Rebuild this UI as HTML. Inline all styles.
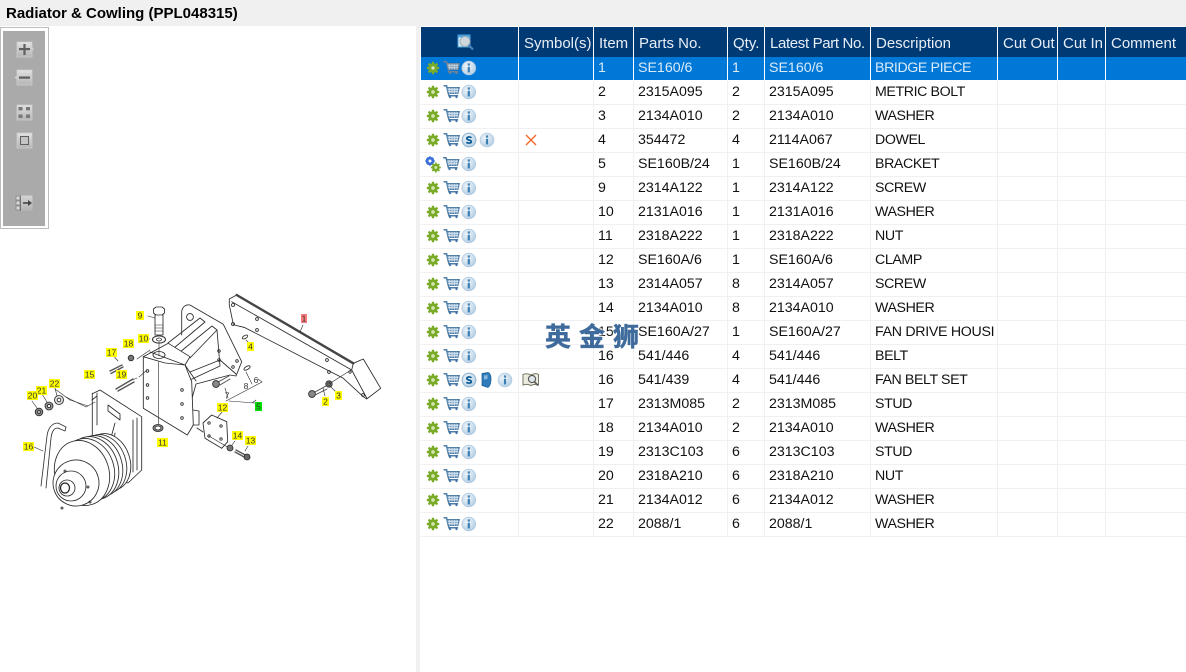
<!DOCTYPE html>
<html><head><meta charset="utf-8"><title>Radiator &amp; Cowling</title>
<style>
html,body{margin:0;padding:0;background:#fff;width:1186px;height:672px;overflow:hidden;font-family:"Liberation Sans","Noto Sans CJK SC",sans-serif;}
.abs{position:absolute}
#title{left:0;top:0;width:1186px;height:26px;background:#f0f0f0;font-weight:bold;font-size:15px;line-height:28px;color:#000;padding-left:6px;box-sizing:border-box;}
#div{left:416px;top:26px;width:4px;height:646px;background:#f0f0f0}
table{position:absolute;left:421px;top:27px;border-collapse:separate;border-spacing:0;table-layout:fixed;width:765px;font-size:14.2px;color:#111}
th{height:30px;background:#003a75;color:#e8eef5;font-weight:normal;font-size:15px;text-align:left;padding:3px 0 0 5px;box-sizing:border-box;border-right:1px solid #fff;white-space:nowrap;overflow:hidden}
td{height:24px;box-sizing:border-box;border-right:1px solid #f0f0f0;border-bottom:1px solid #f0f0f0;padding:0 0 1px 4px;white-space:nowrap;overflow:hidden}
td.d{letter-spacing:-.4px}
tr.s td{background:#0078d7;color:#dcebf8;border-right-color:#fff;border-bottom-color:#fff}
th:last-child,td:last-child{border-right:0}
#wm{left:545px;top:321px;font-size:26px;font-weight:bold;color:#3e6a9c;letter-spacing:8px;line-height:30px;font-family:"Noto Sans CJK SC",sans-serif;white-space:nowrap;-webkit-text-stroke:.5px #3e6a9c;text-shadow:0 0 3px #fff,0 0 3px #fff}
svg{position:absolute;left:0;top:0}
</style></head><body>
<div id="title" class="abs">Radiator &amp; Cowling (PPL048315)</div>
<div id="div" class="abs"></div>

<table>
<colgroup><col style="width:98px"><col style="width:75px"><col style="width:40px"><col style="width:94px"><col style="width:37px"><col style="width:106px"><col style="width:127px"><col style="width:60px"><col style="width:48px"><col style="width:80px"></colgroup>
<tr><th></th><th>Symbol(s)</th><th>Item</th><th>Parts No.</th><th>Qty.</th><th style="letter-spacing:-.35px">Latest Part No.</th><th>Description</th><th>Cut Out</th><th>Cut In</th><th>Comment</th></tr>
<tr class="s"><td></td><td></td><td>1</td><td>SE160/6</td><td>1</td><td>SE160/6</td><td class="d">BRIDGE PIECE</td><td></td><td></td><td></td></tr>
<tr><td></td><td></td><td>2</td><td>2315A095</td><td>2</td><td>2315A095</td><td class="d">METRIC BOLT</td><td></td><td></td><td></td></tr>
<tr><td></td><td></td><td>3</td><td>2134A010</td><td>2</td><td>2134A010</td><td class="d">WASHER</td><td></td><td></td><td></td></tr>
<tr><td></td><td></td><td>4</td><td>354472</td><td>4</td><td>2114A067</td><td class="d">DOWEL</td><td></td><td></td><td></td></tr>
<tr><td></td><td></td><td>5</td><td>SE160B/24</td><td>1</td><td>SE160B/24</td><td class="d">BRACKET</td><td></td><td></td><td></td></tr>
<tr><td></td><td></td><td>9</td><td>2314A122</td><td>1</td><td>2314A122</td><td class="d">SCREW</td><td></td><td></td><td></td></tr>
<tr><td></td><td></td><td>10</td><td>2131A016</td><td>1</td><td>2131A016</td><td class="d">WASHER</td><td></td><td></td><td></td></tr>
<tr><td></td><td></td><td>11</td><td>2318A222</td><td>1</td><td>2318A222</td><td class="d">NUT</td><td></td><td></td><td></td></tr>
<tr><td></td><td></td><td>12</td><td>SE160A/6</td><td>1</td><td>SE160A/6</td><td class="d">CLAMP</td><td></td><td></td><td></td></tr>
<tr><td></td><td></td><td>13</td><td>2314A057</td><td>8</td><td>2314A057</td><td class="d">SCREW</td><td></td><td></td><td></td></tr>
<tr><td></td><td></td><td>14</td><td>2134A010</td><td>8</td><td>2134A010</td><td class="d">WASHER</td><td></td><td></td><td></td></tr>
<tr><td></td><td></td><td>15</td><td>SE160A/27</td><td>1</td><td>SE160A/27</td><td style="letter-spacing:-.3px">FAN DRIVE HOUSI</td><td></td><td></td><td></td></tr>
<tr><td></td><td></td><td>16</td><td>541/446</td><td>4</td><td>541/446</td><td class="d">BELT</td><td></td><td></td><td></td></tr>
<tr><td></td><td></td><td>16</td><td>541/439</td><td>4</td><td>541/446</td><td class="d">FAN BELT SET</td><td></td><td></td><td></td></tr>
<tr><td></td><td></td><td>17</td><td>2313M085</td><td>2</td><td>2313M085</td><td class="d">STUD</td><td></td><td></td><td></td></tr>
<tr><td></td><td></td><td>18</td><td>2134A010</td><td>2</td><td>2134A010</td><td class="d">WASHER</td><td></td><td></td><td></td></tr>
<tr><td></td><td></td><td>19</td><td>2313C103</td><td>6</td><td>2313C103</td><td class="d">STUD</td><td></td><td></td><td></td></tr>
<tr><td></td><td></td><td>20</td><td>2318A210</td><td>6</td><td>2318A210</td><td class="d">NUT</td><td></td><td></td><td></td></tr>
<tr><td></td><td></td><td>21</td><td>2134A012</td><td>6</td><td>2134A012</td><td class="d">WASHER</td><td></td><td></td><td></td></tr>
<tr><td></td><td></td><td>22</td><td>2088/1</td><td>6</td><td>2088/1</td><td class="d">WASHER</td><td></td><td></td><td></td></tr>
</table>

<svg width="1186" height="672" viewBox="0 0 1186 672" xmlns="http://www.w3.org/2000/svg">
<defs>
<radialGradient id="ig" cx=".4" cy=".35" r=".8"><stop offset="0" stop-color="#f2f7fb"/><stop offset="1" stop-color="#a9c7e0"/></radialGradient>
<linearGradient id="bg" x1="0" y1="0" x2="0" y2="1"><stop offset="0" stop-color="#e2e2e2"/><stop offset="1" stop-color="#b4b4b4"/></linearGradient>
<g id="gear"><circle r="3.200" fill="none" stroke="#79ab29" stroke-width="3"/><path stroke="#79ab29" stroke-width="2.300" d="M0-6.200V-3.800M0 3.800V6.200M-6.200 0H-3.800M3.800 0H6.200M-4.400-4.400L-2.700-2.700M4.400 4.400L2.700 2.700M-4.400 4.400L-2.700 2.700M4.400-4.400L2.700-2.700"/><circle r="1.700" fill="#d6e8b0"/></g>
<g id="gearb"><circle r="2.900" fill="none" stroke="#3a6fd8" stroke-width="2.800"/><path stroke="#3a6fd8" stroke-width="1.900" d="M0-4.600V-3M0 3V4.600M-4.600 0H-3M3 0H4.600M-3.200-3.200L-2-2M3.200 3.200L2 2M-3.200 3.200L-2 2M3.200-3.200L2-2"/></g>
<g id="cart" fill="none" stroke="#4a7ba6"><path d="M-8-6H-5L-2.600 4H6.600" stroke-width="1.500"/><path d="M-4.600-4.200H7.800L6.400 1.800H-3.200Z" fill="#8fb2cf" stroke-width="1.100"/><path d="M-2-4V2M.5-4V2M3-4V2M5.500-4V2M-4-2H7M-3.500 0H6.600" stroke-width=".6" stroke="#dbe7f0"/><circle cx="-1.500" cy="5.300" r="1.200" fill="#4a7ba6" stroke="none"/><circle cx="5" cy="5.300" r="1.200" fill="#4a7ba6" stroke="none"/></g>
<g id="cartg" fill="none" stroke="#6f8296"><path d="M-8-6H-5L-2.600 4H6.600" stroke-width="1.500"/><path d="M-4.600-4.200H7.800L6.400 1.800H-3.200Z" fill="#8ea3b8" stroke-width="1.100"/><path d="M-2-4V2M.5-4V2M3-4V2M5.500-4V2M-4-2H7M-3.500 0H6.600" stroke-width=".6" stroke="#c8d6e2"/><circle cx="-1.500" cy="5.300" r="1.200" fill="#6f8296" stroke="none"/><circle cx="5" cy="5.300" r="1.200" fill="#6f8296" stroke="none"/></g>
<g id="info"><circle r="6.900" fill="url(#ig)" stroke="#b0cbe0" stroke-width=".8"/><rect x="-1.100" y="-4.600" width="2.200" height="2.200" fill="#3a7fb3"/><rect x="-1.100" y="-1.200" width="2.200" height="5.600" fill="#3a7fb3"/></g>
<g id="ss"><circle r="6.900" fill="url(#ig)" stroke="#8fb3d0" stroke-width="1"/><path d="M2.300-2.100C1.500-3.400-2.200-3.500-2.200-1.400C-2.200.3 2.300-.3 2.300 1.600C2.300 3.500-1.600 3.400-2.500 2.100" fill="none" stroke="#075a93" stroke-width="1.700"/></g>
<g id="row"><use href="#gear" x="433" y="0"/><use href="#cart" x="451.500" y="-.3"/><use href="#info" x="468.800" y="0"/></g>
<filter id="soft" x="-5%" y="-5%" width="110%" height="110%"><feGaussianBlur stdDeviation=".38"/></filter>
</defs>

<!-- toolbar -->
<rect x=".5" y="27.500" width="48" height="201" fill="#fff" stroke="#bdbdbd"/>
<rect x="3" y="31" width="42" height="195" fill="#aaaaaa"/>
<g stroke="#cfcfcf" stroke-width=".8" fill="url(#bg)">
<path d="M17 42H32V47.500L33.500 49L32 50.500V57H17Z"/>
<path d="M17 70H32V85H17V79L15 77.500L17 76Z"/>
<rect x="17" y="105" width="15" height="15"/>
<rect x="17" y="133" width="15" height="15"/>
</g>
<g fill="#5f5f5f">
<rect x="19" y="48" width="11" height="2.200"/><rect x="23.400" y="44" width="2.200" height="11"/>
<rect x="19" y="76.500" width="11" height="2.200"/>
<rect x="18.500" y="107" width="4" height="3.400" fill="#777"/><rect x="26" y="107" width="4" height="3.400" fill="#777"/><rect x="18.500" y="114.500" width="4" height="3.400" fill="#777"/><rect x="26" y="114.500" width="4" height="3.400" fill="#777"/>
</g>
<rect x="20.500" y="136.500" width="8" height="8" fill="#c4c4c4" stroke="#5f5f5f" stroke-width="1"/>
<rect x="15.500" y="195.500" width="17" height="15.500" fill="url(#bg)" opacity=".75"/>
<g fill="#d8d8d8" stroke="#777" stroke-width=".7"><rect x="16" y="196" width="4" height="4"/><rect x="16" y="201" width="4" height="4"/><rect x="16" y="206" width="4" height="4"/></g>
<path d="M20.500 195.500V211" stroke="#666" stroke-width=".8"/>
<path d="M23 203H29" stroke="#444" stroke-width="1.600"/><path d="M28 200L32 203L28 206Z" fill="#444"/>

<!-- header search icon -->
<rect x="458" y="35" width="12" height="12" fill="#d7ebf8" stroke="#4aa0d8"/>
<rect x="458" y="35" width="12" height="2.400" fill="#4aa0d8"/>
<circle cx="465" cy="41.500" r="5" fill="#cfd6dc" stroke="#9fb0bf"/>
<path d="M468.500 45L473 49.500" stroke="#4f86b8" stroke-width="2.200"/>

<!-- row icons -->
<g><use href="#gear" x="433" y="68"/><use href="#cartg" x="451.500" y="67.700"/><use href="#info" x="468.800" y="68"/></g>
<use href="#row" y="92"/>
<use href="#row" y="116"/>
<g><use href="#gear" x="433" y="140"/><use href="#cart" x="451.500" y="139.700"/><use href="#ss" x="469" y="140"/><use href="#info" x="487" y="140"/></g>
<path d="M526 135L536 145M536 135L526 145" stroke="#f0692a" stroke-width="1.400" fill="none"/>
<g><use href="#gearb" x="430" y="161"/><use href="#gear" x="436" y="167.500" transform="translate(87 33.500) scale(.8)"/><use href="#cart" x="451" y="163.700"/><use href="#info" x="468.800" y="164"/></g>
<use href="#row" y="188"/>
<use href="#row" y="212"/>
<use href="#row" y="236"/>
<use href="#row" y="260"/>
<use href="#row" y="284"/>
<use href="#row" y="308"/>
<use href="#row" y="332"/>
<use href="#row" y="356"/>
<g><use href="#gear" x="433" y="380"/><use href="#cart" x="451.500" y="379.700"/><use href="#ss" x="469" y="380"/>
<path d="M482 373.500L488 372.500C490 373 491 375 491 379C491 383 490 386 488 387.500L482 385.500Z" fill="#2f7cbd" stroke="#17588f" stroke-width=".7"/><path d="M484 375.500L487.500 375V379L484 379.500Z" fill="#8cb8dc"/>
<use href="#info" x="505" y="380"/>
<path d="M523 374.500C525 373.500 528 373.500 531 375C534 373.500 537 373.500 538.500 374.500V385C536 384 533 384.500 531 385.500C529 384.500 526 384 523 385Z" fill="#ecebdf" stroke="#777764" stroke-width="1"/>
<circle cx="532" cy="379" r="3.600" fill="#dfe6ea" stroke="#555" stroke-width="1.100"/><path d="M534.500 381.800L538 385.500" stroke="#555" stroke-width="1.600"/></g>
<use href="#row" y="404"/>
<use href="#row" y="428"/>
<use href="#row" y="452"/>
<use href="#row" y="476"/>
<use href="#row" y="500"/>
<use href="#row" y="524"/>

<!-- drawing -->
<g fill="none" stroke="#2a2a2a" stroke-width=".85" filter="url(#soft)" stroke-linejoin="round" stroke-linecap="round">
<!-- arm -->
<path d="M229.300 299L236.700 295L353.300 363.300L363.300 359L380.700 388.300L366.700 399L363.300 396.700L343.300 378.300L245 327.700C240 326 236 326 233.300 324.300L229.300 305Z" fill="#fff"/>
<path d="M236.700 295L353.300 363.300" stroke-width="2.400" stroke="#444"/>
<path d="M231.700 301.700L351.700 370L353.300 363.300M351.700 370L366.700 398"/>
<circle cx="233" cy="305" r="1.500"/><circle cx="233" cy="324" r="1.500"/><circle cx="257" cy="319" r="1.400"/><circle cx="257" cy="330" r="1.400"/><circle cx="327" cy="360" r="1.400"/><circle cx="329" cy="372" r="1.400"/><circle cx="350" cy="372" r="1.200"/><circle cx="363" cy="395" r="1.400"/>
<!-- bracket back -->
<path d="M181.700 335V311.700C182 307 186 304 190 305L223.300 324.300L241.700 361.700L236 376L230 375L196 384L191 402" fill="#fff"/>
<circle cx="190" cy="317" r="3.400"/>
<path d="M168 343L200 318L205 322L174 348M180 352L212 326L217 330L190 358M217 330L220 366L190 380M190 372L220 360L236 374M185 365L196 381"/>
<circle cx="219" cy="351" r="1.300"/><circle cx="219" cy="360" r="1.300"/><circle cx="237" cy="361" r="1.300"/><circle cx="233" cy="367" r="1.300"/>
<!-- bracket front block -->
<path d="M143.300 356.700L168.300 343.300L190 356.700L185 365L191.700 381.700L193.300 425L187.300 435L143.300 408.300Z" fill="#fff"/>
<path d="M150 352L185 365M143.300 356.700L165 363L185 365"/>
<ellipse cx="159" cy="355" rx="6" ry="3.500"/>
<circle cx="147.500" cy="371" r="1.300"/><circle cx="147.500" cy="385" r="1.300"/><circle cx="147.500" cy="398" r="1.300"/><circle cx="182" cy="390" r="1.300"/><circle cx="182" cy="404" r="1.300"/><circle cx="182" cy="418" r="1.300"/>
<path d="M193 410L199 411V425L193 425M197 428L203 432"/>
<!-- bolt 9 -->
<path d="M155 311L163 311L163 335L155 335Z" fill="#fff"/><path d="M153.500 309L156 307H162L164.500 309V313L162 315H156L153.500 313Z" fill="#fff"/><path d="M155 325H163M155 328H163M155 331H163" stroke-width=".6"/>
<ellipse cx="159" cy="339.500" rx="6.500" ry="3.600" fill="#fff" stroke-width="1"/><ellipse cx="159" cy="339.500" rx="2.500" ry="1.500"/>
<path d="M159 342V356M158.500 362V425" stroke-width=".6"/>
<ellipse cx="158" cy="428" rx="5" ry="3.500" fill="#999"/><ellipse cx="158" cy="428" rx="3" ry="2" fill="#fff"/>
<path d="M150 350L137 359M139 377L147 370M130 381L137 378" stroke-width=".6"/>
<!-- studs 17,19 -->
<path d="M110 371L122 365M111 373.500L123 367M116 389L133 379M118 391L134 382" stroke-width="1.400" stroke="#555"/>
<circle cx="131" cy="358" r="2.800" fill="#777"/>
<!-- small bolts -->
<path d="M218 382L229 376M220 385L230 379" stroke="#444"/><circle cx="216" cy="384" r="3.400" fill="#888"/>
<path d="M315 392L326 386M316 394.500L327 389" stroke="#444"/><circle cx="312" cy="394" r="3.400" fill="#888"/>
<circle cx="329" cy="384" r="3.200" fill="#777"/><circle cx="329" cy="384" r="1.200" fill="#ddd"/>
<ellipse cx="245" cy="337" rx="3" ry="1.500" transform="rotate(-30 245 337)"/>
<ellipse cx="247" cy="368" rx="3.500" ry="1.600" transform="rotate(-30 247 368)"/>
<!-- leaders -->
<path d="M226 401L262 382L258 379M229 401L255 403M256 400L252 403M246 372L252 384M225 388L228 398M249 343L246 340M303 325L300 332M325 396L323 388M336 392L330 386M329 384L351 370" stroke-width=".6"/>
<path d="M148 316L155 318M140 339L150 339M112 354L118 361M55 389L70 400L88 406" stroke-width=".6"/>
<!-- plate 15 -->
<path d="M93.300 393.300L100 390L141.700 416.700V470L128 483L92.300 470V393.300Z" fill="#fff"/>
<path d="M97 393V425M92 400L97 396M133 420V472M137 418V470M108 405L120 414V420L108 411ZM115 433L113 450M109 445L115 423" />
<!-- pulley -->
<g transform="translate(6 5)">
<ellipse cx="102" cy="457" rx="22" ry="29" transform="rotate(-18 102 457)" fill="#fff"/>
<ellipse cx="97" cy="459" rx="23" ry="30" transform="rotate(-18 97 459)" fill="#fff"/>
<ellipse cx="92" cy="461" rx="24" ry="31" transform="rotate(-18 92 461)" fill="#fff"/>
<ellipse cx="87" cy="463" rx="25" ry="32" transform="rotate(-18 87 463)" fill="#fff"/>
<ellipse cx="82" cy="465" rx="26" ry="32" transform="rotate(-18 82 465)" fill="#fff"/>
<ellipse cx="76" cy="468" rx="27" ry="33" transform="rotate(-18 76 468)" fill="#fff"/>
<ellipse cx="70" cy="478" rx="23" ry="23" transform="rotate(-18 70 478)" fill="#fff"/>
</g>
<ellipse cx="71" cy="486" rx="15" ry="15" fill="#fff"/>
<ellipse cx="67" cy="488" rx="8" ry="8" fill="#fff"/>
<ellipse cx="65" cy="488" rx="4.500" ry="5" stroke-width="1.300"/>
<circle cx="65" cy="471" r="1"/><circle cx="88" cy="487" r="1"/><circle cx="62" cy="508" r="1"/><circle cx="90" cy="502" r="1"/>
<!-- belt 16 -->
<path d="M41 486L47 436C48 428 52 423 58 423L66 427L65 431L58 428C54 428 52 431 51 438L46 488" stroke="#333" fill="#fff"/>
<path d="M34 447L43 451" stroke-width=".6"/>
<!-- washers -->
<ellipse cx="59" cy="400" rx="4.500" ry="4.500" fill="#ddd"/><circle cx="59" cy="400" r="1.800" fill="#fff"/>
<circle cx="49" cy="406" r="4" fill="#999"/><circle cx="49" cy="406" r="1.600" fill="#fff"/>
<circle cx="39" cy="412" r="3.800" fill="#888"/><circle cx="39" cy="412" r="1.400" fill="#ddd"/>
<path d="M66 397L86 407L95 402M32 401L37 408M42 394L47 402M55 388L57 396" stroke-width=".6"/>
<!-- plate 12 -->
<path d="M203 423L211.700 415L226.700 421.700L227.700 441.700L221.700 448.300L205 438.300Z" fill="#fff"/>
<circle cx="209" cy="423" r="1.200"/><circle cx="221" cy="426" r="1.200"/><circle cx="209" cy="436" r="1.200"/><circle cx="221" cy="439" r="1.200"/>
<path d="M222 412L217 418M209 436L229 448M235 441L232 445M248 446L245 451" stroke-width=".6"/>
<circle cx="230" cy="448" r="3" fill="#777"/>
<path d="M236 450L247 456M235 452L246 458" stroke="#555" stroke-width="1.300"/><circle cx="247" cy="457" r="3" fill="#666"/>
</g>

<!-- labels -->
<g font-size="8.500" text-anchor="middle" fill="#333" font-family="Liberation Sans, sans-serif">
<rect x="301" y="314" width="6" height="9" fill="#f87b7b"/><text x="304" y="321.500">1</text>
<rect x="136" y="311" width="8" height="9" fill="#ffff00"/><text x="140" y="318.500">9</text>
<rect x="138" y="334" width="11" height="9" fill="#ffff00"/><text x="143.500" y="341.500">10</text>
<rect x="123" y="339" width="11" height="9" fill="#ffff00"/><text x="128.500" y="346.500">18</text>
<rect x="106" y="348" width="11" height="9" fill="#ffff00"/><text x="111.500" y="355.500">17</text>
<rect x="116" y="370" width="11" height="9" fill="#ffff00"/><text x="121.500" y="377.500">19</text>
<rect x="84" y="370" width="11" height="9" fill="#ffff00"/><text x="89.500" y="377.500">15</text>
<rect x="49" y="379" width="11" height="9" fill="#ffff00"/><text x="54.500" y="386.500">22</text>
<rect x="36" y="386" width="11" height="9" fill="#ffff00"/><text x="41.500" y="393.500">21</text>
<rect x="27" y="391" width="11" height="9" fill="#ffff00"/><text x="32.500" y="398.500">20</text>
<rect x="23" y="442" width="11" height="9" fill="#ffff00"/><text x="28.500" y="449.500">16</text>
<rect x="157" y="438" width="11" height="9" fill="#ffff00"/><text x="162.500" y="445.500">11</text>
<rect x="217" y="403" width="11" height="9" fill="#ffff00"/><text x="222.500" y="410.500">12</text>
<rect x="232" y="431" width="11" height="9" fill="#ffff00"/><text x="237.500" y="438.500">14</text>
<rect x="245" y="436" width="11" height="9" fill="#ffff00"/><text x="250.500" y="443.500">13</text>
<rect x="255" y="402" width="7" height="9" fill="#00e000"/><text x="258.500" y="409.500">5</text>
<rect x="247" y="342" width="7" height="9" fill="#ffff00"/><text x="250.500" y="349.500">4</text>
<rect x="322" y="397" width="7" height="9" fill="#ffff00"/><text x="325.500" y="404.500">2</text>
<rect x="335" y="391" width="7" height="9" fill="#ffff00"/><text x="338.500" y="398.500">3</text>
<text x="227" y="398.500">7</text><text x="246" y="389">8</text><text x="256" y="383">6</text>
</g>
</svg>
<div id="wm" class="abs">英金狮</div>
</body></html>
